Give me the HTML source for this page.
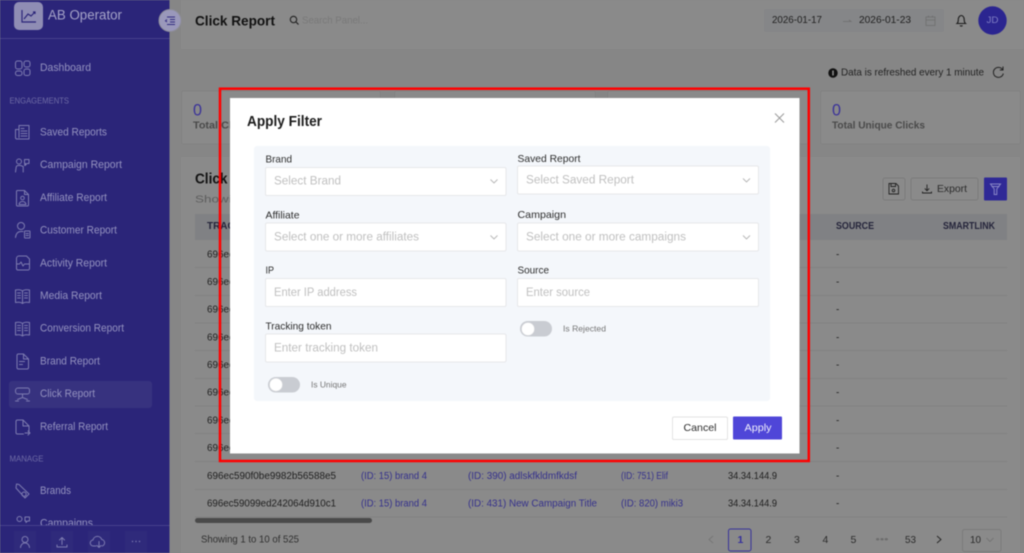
<!DOCTYPE html>
<html lang="en"><head><meta charset="utf-8"><title>Click Report</title>
<style>
html,body{margin:0;padding:0;width:1024px;height:553px;overflow:hidden;background:#868686}
svg{display:block;filter:blur(.5px)}
text{font-family:"Liberation Sans",sans-serif;dominant-baseline:central;transform:translateY(.9px)}
.m{font-size:11px;fill:#9492bf}
.sec{font-size:8.5px;fill:#6f6ca6}
.i{fill:none;stroke:#7d7bb0;stroke-width:1;stroke-linecap:round;stroke-linejoin:round}
.lb{font-size:10.5px;fill:#2c2c2c}
.ph{font-size:11.5px;fill:#c0c0c0}
.f{fill:#fff;stroke:#e7e8ea;stroke-width:1}
.ch{fill:none;stroke:#b5b5b5;stroke-width:.9}
.t{font-size:10px;fill:#1f1f1f}
.l{font-size:10px;fill:#35318c}
.th{font-size:10px;font-weight:bold;fill:#24243a}
.p{font-size:10.5px;fill:#2b2b2b}
.card{fill:#8a8a8a;stroke:#828282;stroke-width:1}
</style></head><body>
<svg width="1024" height="553" viewBox="0 0 1024 553" xmlns="http://www.w3.org/2000/svg">
<rect width="1024" height="553" fill="#868686"/>

<!-- header -->
<rect x="181" y="0" width="843" height="49" fill="#8a8a8a"/>
<text x="195" y="19.500" font-size="14" font-weight="bold" fill="#111" textLength="80" lengthAdjust="spacingAndGlyphs">Click Report</text>
<circle cx="293.500" cy="19.500" r="3.200" fill="none" stroke="#222" stroke-width="1.100"/><path d="M296 22l2.500 2.500" stroke="#222" stroke-width="1.200"/>
<text x="302" y="19.500" font-size="10.500" fill="#797979" textLength="66" lengthAdjust="spacingAndGlyphs">Search Panel...</text>
<rect x="764" y="9" width="180" height="23" rx="2" fill="#858688"/>
<text x="772" y="19.500" class="t" textLength="50" lengthAdjust="spacingAndGlyphs">2026-01-17</text>
<path d="M843 21.500h8l-2-1.500" fill="none" stroke="#6e6e6e" stroke-width=".8"/>
<text x="859" y="19.500" class="t" textLength="52" lengthAdjust="spacingAndGlyphs">2026-01-23</text>
<path d="M926 17h9v8.500h-9zM926 20h9M928.500 15.500v2M932.500 15.500v2" fill="none" stroke="#6e6e6e" stroke-width=".8"/>
<path d="M957 23.500h8.500c-1.200-1-1.300-2-1.300-4 0-2-1.200-4-2.900-4s-3 2-3 4c0 2-.2 3-1.300 4zM960 25.500c.6.700 1.900.700 2.500 0" fill="none" stroke="#1a1a1a" stroke-width="1.100"/>
<circle cx="992.500" cy="20.500" r="14.200" fill="#2b2590"/>
<text x="986.500" y="19.800" font-size="9.500" fill="#7f7dc4" textLength="12" lengthAdjust="spacingAndGlyphs">JD</text>

<!-- refresh info -->
<circle cx="833" cy="73" r="4.700" fill="#111"/><rect x="832.300" y="70.500" width="1.400" height="5" fill="#999"/>
<text x="841" y="71.800" font-size="10.500" fill="#222" textLength="143" lengthAdjust="spacingAndGlyphs">Data is refreshed every 1 minute</text>
<path d="M1002.500 69.500a5 5 0 1 0 .8 4M1003 66.500v3.500h-3.200" fill="none" stroke="#222" stroke-width="1"/>

<!-- stat cards -->
<rect class="card" x="181.500" y="91" width="199" height="53" rx="2"/>
<rect class="card" x="394.500" y="91" width="201" height="53" rx="2"/>
<rect class="card" x="607.500" y="91" width="201" height="53" rx="2"/>
<rect class="card" x="820.500" y="91" width="200" height="53" rx="2"/>
<text x="193" y="109" font-size="17" fill="#3a3299" textLength="9" lengthAdjust="spacingAndGlyphs">0</text>
<text x="193" y="124.800" font-size="10.500" font-weight="bold" fill="#4a4a4a" textLength="60" lengthAdjust="spacingAndGlyphs">Total Clicks</text>
<text x="832" y="109" font-size="17" fill="#3a3299" textLength="9" lengthAdjust="spacingAndGlyphs">0</text>
<text x="832" y="124.800" font-size="10.500" font-weight="bold" fill="#4a4a4a" textLength="93" lengthAdjust="spacingAndGlyphs">Total Unique Clicks</text>

<!-- table card -->
<rect x="181" y="157" width="839" height="396" fill="#8a8a8a"/>
<text x="195" y="178.500" font-size="14.500" font-weight="bold" fill="#111" textLength="80" lengthAdjust="spacingAndGlyphs">Click Report</text>
<text x="195" y="198.500" font-size="10.500" fill="#5d5d5d" textLength="130" lengthAdjust="spacingAndGlyphs">Showing click records</text>
<rect x="883" y="178" width="22" height="22" rx="2" fill="#8a8a8a" stroke="#7b7b7b"/>
<path d="M889 183.500h7l2.500 2.500v8h-9.500zM891 183.500v3h4.500v-3" fill="none" stroke="#222" stroke-width=".9"/><circle cx="893.500" cy="190.500" r="1.300" fill="none" stroke="#222" stroke-width=".9"/>
<rect x="911" y="178" width="67" height="22" rx="2" fill="#8a8a8a" stroke="#7b7b7b"/>
<path d="M927 184.500v6M924.800 188.500l2.200 2.200 2.200-2.200M922.500 191.500v1.500h9v-1.500" fill="none" stroke="#222" stroke-width=".9"/>
<text x="937" y="188" font-size="10.500" fill="#2b2b2b" textLength="30" lengthAdjust="spacingAndGlyphs">Export</text>
<rect x="984" y="177.500" width="23" height="23" rx="1" fill="#2f2996"/>
<path d="M990.500 184h10l-3.700 5v5.500h-2.600V189zM991.500 186.500h8" fill="none" stroke="#8a88c8" stroke-width="1"/>
<rect x="195" y="214" width="812" height="26" fill="#808184"/>
<text x="207" y="225.500" class="th" textLength="90" lengthAdjust="spacingAndGlyphs">TRACKING TOKEN</text>
<text x="836" y="225.500" class="th" textLength="38" lengthAdjust="spacingAndGlyphs">SOURCE</text>
<text x="943" y="225.500" class="th" textLength="52" lengthAdjust="spacingAndGlyphs">SMARTLINK</text>
<g stroke="#818181" stroke-width="1">
<path d="M195 267.500H1007M195 295.500H1007M195 323H1007M195 350.500H1007M195 378.500H1007M195 406H1007M195 433.500H1007M195 461.500H1007M195 489.500H1007M195 517H1007"/>
</g>
<g class="t">
<text class="t" x="207" y="254" textLength="129" lengthAdjust="spacingAndGlyphs">696ec590f0be9982b56588e5</text>
<text class="t" x="207" y="281.500" textLength="129" lengthAdjust="spacingAndGlyphs">696ec590f0be9982b56588e5</text>
<text class="t" x="207" y="309" textLength="129" lengthAdjust="spacingAndGlyphs">696ec590f0be9982b56588e5</text>
<text class="t" x="207" y="337" textLength="129" lengthAdjust="spacingAndGlyphs">696ec590f0be9982b56588e5</text>
<text class="t" x="207" y="364.500" textLength="129" lengthAdjust="spacingAndGlyphs">696ec590f0be9982b56588e5</text>
<text class="t" x="207" y="392" textLength="129" lengthAdjust="spacingAndGlyphs">696ec590f0be9982b56588e5</text>
<text class="t" x="207" y="420" textLength="129" lengthAdjust="spacingAndGlyphs">696ec590f0be9982b56588e5</text>
<text class="t" x="207" y="447.500" textLength="129" lengthAdjust="spacingAndGlyphs">696ec590f0be9982b56588e5</text>
<text class="t" x="207" y="475.500" textLength="129" lengthAdjust="spacingAndGlyphs">696ec590f0be9982b56588e5</text>
<text class="t" x="207" y="503" textLength="129" lengthAdjust="spacingAndGlyphs">696ec59099ed242064d910c1</text>
<text class="t" x="836" y="254">-</text><text class="t" x="836" y="281.500">-</text><text class="t" x="836" y="309">-</text><text class="t" x="836" y="337">-</text><text class="t" x="836" y="364.500">-</text><text class="t" x="836" y="392">-</text><text class="t" x="836" y="420">-</text><text class="t" x="836" y="447.500">-</text><text class="t" x="836" y="475.500">-</text><text class="t" x="836" y="503">-</text>
</g>
<text class="l" x="361" y="475.500" textLength="66" lengthAdjust="spacingAndGlyphs">(ID: 15) brand 4</text>
<text class="l" x="361" y="503" textLength="66" lengthAdjust="spacingAndGlyphs">(ID: 15) brand 4</text>
<text class="l" x="468" y="475.500" textLength="109" lengthAdjust="spacingAndGlyphs">(ID: 390) adlskfkldmfkdsf</text>
<text class="l" x="468" y="503" textLength="129" lengthAdjust="spacingAndGlyphs">(ID: 431) New Campaign Title</text>
<text class="l" x="621" y="475.500" textLength="47" lengthAdjust="spacingAndGlyphs">(ID: 751) Elif</text>
<text class="l" x="621" y="503" textLength="62" lengthAdjust="spacingAndGlyphs">(ID: 820) miki3</text>
<text class="t" x="728" y="475.500" textLength="49" lengthAdjust="spacingAndGlyphs">34.34.144.9</text>
<text class="t" x="728" y="503" textLength="49" lengthAdjust="spacingAndGlyphs">34.34.144.9</text>
<rect x="195" y="518" width="177" height="5" rx="2.500" fill="#4a4a4a"/>

<!-- pagination -->
<text x="201" y="538.500" font-size="10.500" fill="#2f2f2f" textLength="98" lengthAdjust="spacingAndGlyphs">Showing 1 to 10 of 525</text>
<path d="M713 536l-4 3.500 4 3.500" fill="none" stroke="#757575" stroke-width=".9"/>
<rect x="728.500" y="529" width="22.500" height="22" rx="2" fill="none" stroke="#38339a"/>
<text x="737.500" y="539" font-size="10.500" font-weight="bold" fill="#35309c">1</text>
<text class="p" x="765.500" y="539">2</text><text class="p" x="794" y="539">3</text><text class="p" x="822.500" y="539">4</text><text class="p" x="850.500" y="539">5</text>
<text x="875.500" y="538.500" font-size="9" fill="#6d6d6d" textLength="13" lengthAdjust="spacingAndGlyphs">•••</text>
<text class="p" x="905" y="539" textLength="11" lengthAdjust="spacingAndGlyphs">53</text>
<path d="M937 536l4 3.500-4 3.500" fill="none" stroke="#222" stroke-width=".9"/>
<rect x="962.500" y="529.500" width="38.500" height="22" rx="2" fill="none" stroke="#7b7b7b"/>
<text class="p" x="970" y="539" textLength="11" lengthAdjust="spacingAndGlyphs">10</text>
<path d="M986.500 538l3.500 3.500 3.500-3.500" fill="none" stroke="#717171" stroke-width=".8"/>

<!-- sidebar -->
<rect width="169.500" height="553" fill="#2b2579"/>
<rect x="14" y="2" width="29" height="28" rx="5" fill="#8f8db4"/>
<path d="M22 10v12h14M24 19l4-5 3 2 4-4M33 12h2v2" fill="none" stroke="#2b2579" stroke-width="1.200"/>
<text x="48" y="14" font-size="13.500" fill="#a5a3c8" textLength="74" lengthAdjust="spacingAndGlyphs">AB Operator</text>
<path d="M0 38.500H169.500" stroke="#46418c"/>

<rect x="9" y="381" width="143" height="27" rx="3" fill="#37327f"/>
<text class="m" x="40" y="67" textLength="51" lengthAdjust="spacingAndGlyphs">Dashboard</text>
<text class="sec" x="9.500" y="99.500" textLength="59.500" lengthAdjust="spacingAndGlyphs">ENGAGEMENTS</text>
<text class="m" x="40" y="131.500" textLength="67" lengthAdjust="spacingAndGlyphs">Saved Reports</text>
<text class="m" x="40" y="164" textLength="82" lengthAdjust="spacingAndGlyphs">Campaign Report</text>
<text class="m" x="40" y="197" textLength="67" lengthAdjust="spacingAndGlyphs">Affiliate Report</text>
<text class="m" x="40" y="229.500" textLength="77" lengthAdjust="spacingAndGlyphs">Customer Report</text>
<text class="m" x="40" y="262.500" textLength="67" lengthAdjust="spacingAndGlyphs">Activity Report</text>
<text class="m" x="40" y="295" textLength="62" lengthAdjust="spacingAndGlyphs">Media Report</text>
<text class="m" x="40" y="327.500" textLength="84" lengthAdjust="spacingAndGlyphs">Conversion Report</text>
<text class="m" x="40" y="360.500" textLength="60" lengthAdjust="spacingAndGlyphs">Brand Report</text>
<text class="m" x="40" y="393" textLength="55" lengthAdjust="spacingAndGlyphs">Click Report</text>
<text class="m" x="40" y="426" textLength="68" lengthAdjust="spacingAndGlyphs">Referral Report</text>
<text class="sec" x="9.500" y="457.500" textLength="34" lengthAdjust="spacingAndGlyphs">MANAGE</text>
<text class="m" x="40" y="490" textLength="31" lengthAdjust="spacingAndGlyphs">Brands</text>
<text class="m" x="40" y="522.500" textLength="53" lengthAdjust="spacingAndGlyphs">Campaigns</text>

<g class="i">
<rect x="15.500" y="61" width="6.500" height="8" rx="2"/><rect x="24" y="61" width="6" height="6" rx="2"/><rect x="15.500" y="71" width="6.500" height="4.500" rx="2"/><rect x="24" y="69" width="6" height="6.500" rx="2"/>
<path d="M19 125.500h10v13.500H17a1.500 1.500 0 0 1-1.500-1.500V129.500H19M19 125.500v12M21 128.500h3M21 131h6M21 133.500h6M21 136h6"/>
<circle cx="19" cy="161.500" r="2.500"/><path d="M15.500 172l.7-5c.2-1 1-1.500 2-1.500h2.500l2.500 1v5.500M24.500 159.500h4.500v4h-2l-1.500 1.500v-1.500h-1z"/><circle cx="25" cy="165" r=".5"/>
<path d="M17.500 190.500h7l4 4v10.500a1 1 0 0 1-1 1h-10a1 1 0 0 1-1-1v-13.500a1 1 0 0 1 1-1zM24.500 190.500v4h4"/><circle cx="22.500" cy="198" r="1.800"/><path d="M19 204.500c.3-2 1.500-3 3.500-3s3.200 1 3.500 3z"/>
<circle cx="21" cy="226" r="3.500"/><path d="M15.500 237.500c.5-4 2.500-6 5.500-6h2"/><rect x="24.500" y="231" width="5.500" height="7" rx=".5"/><path d="M26 233.500h2.500M26 235.500h2.500"/>
<path d="M19 256h7.500l3 3v9.500a1.500 1.500 0 0 1-1.500 1.500H18a1.500 1.500 0 0 1-1.500-1.500V258.500a2.500 2.500 0 0 1 2.500-2.500zM16.500 264h3l1.500-2 2 4 1.500-2h5"/>
<path d="M22.500 291c-1.500-1.500-5-1.500-7-1v12.500c2-.5 5.500-.5 7 1 1.500-1.500 5-1.500 7-1V290c-2-.5-5.500-.5-7 1zM22.500 291v12.500M17.500 293h3M17.500 295.500h3M17.500 298h3M24.500 293h3M24.500 295.500h3M24.500 298h3"/>
<path d="M22.500 323.500c-1.500-1.500-5-1.500-7-1v12.500c2-.5 5.500-.5 7 1 1.500-1.500 5-1.500 7-1v-12.500c-2-.5-5.500-.5-7 1zM22.500 323.500v12.500M17.500 325.500h3M17.500 328h3M17.500 330.500h3M24.500 325.500h3M24.500 328h3M24.500 330.500h3"/>
<path d="M18.500 354h5l5 5v8.500a1.500 1.500 0 0 1-1.500 1.500h-8.500a1.500 1.500 0 0 1-1.500-1.500V355.500a1.500 1.500 0 0 1 1.500-1.500zM23.500 354v5h5M19.500 361.500h5M19.500 364.500h3"/>
<path d="M18 388h9.500a2 2 0 0 1 2 2v2a2 2 0 0 1-2 2H18a2.500 2.500 0 0 1-2.500-2.500v-1A2.500 2.500 0 0 1 18 388zM22.500 394v3.500M22.500 397.500l-5 2M22.500 397.500l5 2M15.500 401h3M26.500 401h3"/>
<path d="M18 420h5l6 6v5.500M23 420v6h6M16 421.500a1.500 1.500 0 0 1 1.500-1.500M16 421.500v11a1.500 1.500 0 0 0 1.500 1.500h6M25 433h5M28 431l2 2-2 2"/>
<path d="M16.500 484l2.500.5 10 9.500-4 4-9-10zM24 492a2.200 2.200 0 1 0 .01 0"/>
<circle cx="19.500" cy="519" r="2.500"/><path d="M25 517h4.500v4h-2l-1.500 1.500V521h-1z"/>
</g>
<rect x="0" y="526" width="169.500" height="27" fill="#2b2579"/>
<path d="M0 525.500H169.500" stroke="#46418c"/>
<rect x="14" y="531" width="22" height="22" fill="#2f2a7b"/><rect x="51" y="531" width="22" height="22" fill="#2f2a7b"/><rect x="88" y="531" width="22" height="22" fill="#2f2a7b"/><rect x="125" y="531" width="22" height="22" fill="#2f2a7b"/>
<g class="i">
<circle cx="25" cy="539.500" r="3"/><path d="M20.500 547.500c.5-3 2-4.500 4.500-4.500s4 1.500 4.500 4.500"/>
<path d="M62 537.500v7M59.500 540l2.500-2.500 2.500 2.500M57 545v2h10v-2"/>
<path d="M96 546h-2.500a3 3 0 0 1-.5-6 4.500 4.500 0 0 1 8.700-.5 3.300 3.300 0 0 1 .3 6.500H102M99 541.500v6M97 545.500l2 2 2-2"/>
</g>
<circle cx="132.500" cy="541.500" r=".7" fill="#7d7bb0"/><circle cx="136" cy="541.500" r=".7" fill="#7d7bb0"/><circle cx="139.500" cy="541.500" r=".7" fill="#7d7bb0"/>
<circle cx="170" cy="20.500" r="11" fill="#9a98bb" stroke="#8e8e9a" stroke-width="1"/>
<path d="M167 17h8M170 19.500h5M170 22h5M167 24.500h8M167 19.500l-1.500 1.300 1.500 1.200" fill="none" stroke="#322c80" stroke-width="1"/>

<!-- modal -->
<rect x="230" y="98" width="569.500" height="355.500" fill="#fff"/>
<text x="247" y="121" font-size="14.500" font-weight="bold" fill="#1b1b1b" textLength="75" lengthAdjust="spacingAndGlyphs">Apply Filter</text>
<path d="M775 113.500l9 9M784 113.500l-9 9" stroke="#9a9a9a" stroke-width="1"/>
<rect x="254" y="146" width="516" height="255" rx="3" fill="#f4f7fb"/>

<text class="lb" x="265.500" y="158.500" textLength="26.500" lengthAdjust="spacingAndGlyphs">Brand</text>
<rect class="f" x="265.500" y="167.500" width="240.500" height="28" rx="1.500"/>
<text class="ph" x="274" y="180.500" textLength="67" lengthAdjust="spacingAndGlyphs">Select Brand</text>
<path class="ch" d="M490.500 179.500l3.500 3.500 3.500-3.500"/>

<text class="lb" x="265.500" y="214.500" textLength="34" lengthAdjust="spacingAndGlyphs">Affiliate</text>
<rect class="f" x="265.500" y="223" width="240.500" height="28" rx="1.500"/>
<text class="ph" x="274" y="236.500" textLength="145" lengthAdjust="spacingAndGlyphs">Select one or more affiliates</text>
<path class="ch" d="M490.500 235.500l3.500 3.500 3.500-3.500"/>

<text class="lb" x="265.500" y="269.500" textLength="8.500" lengthAdjust="spacingAndGlyphs">IP</text>
<rect class="f" x="265.500" y="278.500" width="240.500" height="28" rx="1.500"/>
<text class="ph" x="274" y="292" textLength="83" lengthAdjust="spacingAndGlyphs">Enter IP address</text>

<text class="lb" x="265.500" y="325.500" textLength="66" lengthAdjust="spacingAndGlyphs">Tracking token</text>
<rect class="f" x="265.500" y="334" width="240.500" height="28" rx="1.500"/>
<text class="ph" x="274" y="347.500" textLength="104" lengthAdjust="spacingAndGlyphs">Enter tracking token</text>

<rect x="268" y="377" width="32" height="15.500" rx="7.750" fill="#c9ccd2"/>
<circle cx="276" cy="384.700" r="6.500" fill="#fff" stroke="#d8d9dc" stroke-width=".5"/>
<text x="311" y="383.500" font-size="8.500" fill="#757575" textLength="35.500" lengthAdjust="spacingAndGlyphs">Is Unique</text>

<text class="lb" x="517.500" y="158" textLength="63" lengthAdjust="spacingAndGlyphs">Saved Report</text>
<rect class="f" x="517.500" y="166" width="241" height="28" rx="1.500"/>
<text class="ph" x="526" y="179.500" textLength="108" lengthAdjust="spacingAndGlyphs">Select Saved Report</text>
<path class="ch" d="M743 178.500l3.500 3.500 3.500-3.500"/>

<text class="lb" x="517.500" y="214" textLength="48.500" lengthAdjust="spacingAndGlyphs">Campaign</text>
<rect class="f" x="517.500" y="223" width="241" height="28" rx="1.500"/>
<text class="ph" x="526" y="236.500" textLength="160" lengthAdjust="spacingAndGlyphs">Select one or more campaigns</text>
<path class="ch" d="M743 235.500l3.500 3.500 3.500-3.500"/>

<text class="lb" x="517.500" y="269.500" textLength="31.500" lengthAdjust="spacingAndGlyphs">Source</text>
<rect class="f" x="517.500" y="278.500" width="241" height="28" rx="1.500"/>
<text class="ph" x="526" y="292" textLength="64" lengthAdjust="spacingAndGlyphs">Enter source</text>

<rect x="520" y="321" width="32" height="15.500" rx="7.750" fill="#c9ccd2"/>
<circle cx="528" cy="329" r="6.500" fill="#fff" stroke="#d8d9dc" stroke-width=".5"/>
<text x="563" y="327.500" font-size="8.500" fill="#757575" textLength="43" lengthAdjust="spacingAndGlyphs">Is Rejected</text>

<rect x="672.500" y="417" width="55" height="22.500" rx="1.500" fill="#fff" stroke="#e3e3e3"/>
<text x="683.500" y="427" font-size="10.500" fill="#2b2b2b" textLength="33" lengthAdjust="spacingAndGlyphs">Cancel</text>
<rect x="733" y="416.500" width="49" height="23" rx="1" fill="#4f46d8"/>
<text x="744.500" y="427" font-size="10.500" fill="#f0effc" textLength="27" lengthAdjust="spacingAndGlyphs">Apply</text>

<!-- highlight -->
<rect x="220" y="88.700" width="588.800" height="372.300" fill="none" stroke="#ff0000" stroke-width="2.500"/>
</svg>
</body></html>
